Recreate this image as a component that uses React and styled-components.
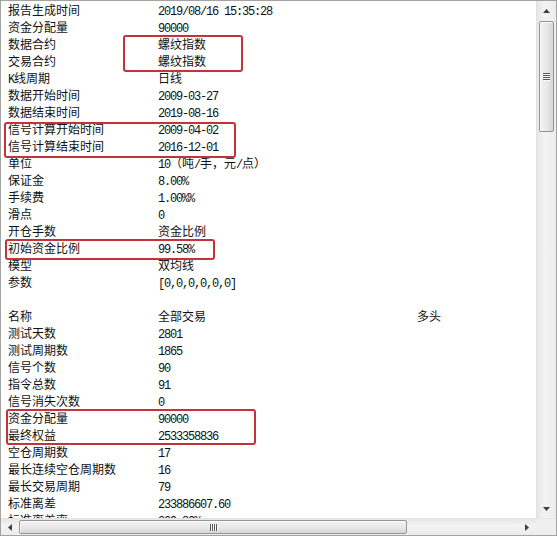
import React from "react";
import styled, { createGlobalStyle } from "styled-components";

const Global = createGlobalStyle`
  html, body { margin: 0; padding: 0; background: #ffffff; }
  #root { width: 557px; height: 536px; }
`;

const Frame = styled.div`
  position: relative;
  box-sizing: border-box;
  width: 557px;
  height: 536px;
  border: 1px solid #a3a3a3;
  background: #fff;
  display: flex;
  flex-direction: column;
  overflow: hidden;
`;

const Top = styled.div`
  flex: 1;
  display: flex;
  min-height: 0;
`;

const Content = styled.div`
  flex: 1;
  overflow: hidden;
  padding: 0 0 0 7px;
  font-family: "Noto Sans CJK SC", "Noto Sans", sans-serif;
  font-size: 12px;
  color: #111;
`;

const Row = styled.div`
  display: grid;
  grid-template-columns: 150px 259px 1fr;
  height: 17px;
  line-height: 17px;
  white-space: nowrap;
`;

const Cell = styled.span`
  overflow: visible;
`;

const Half = styled.span`
  font-family: "Liberation Mono", "DejaVu Sans Mono", monospace;
  font-size: 12px;
  letter-spacing: -1.2px;
`;

const VScroll = styled.div`
  width: 19px;
  background: linear-gradient(to right, #e6e6e6, #f3f3f3 40%, #ececec);
  border-left: 1px solid #e2e2e2;
  display: flex;
  flex-direction: column;
  align-items: center;
`;

const ArrowBox = styled.div`
  width: 17px;
  height: ${(p) => p.$h || 18}px;
  display: flex;
  align-items: center;
  justify-content: center;
  flex-shrink: 0;
`;

const VTrack = styled.div`
  flex: 1;
  width: 100%;
  display: flex;
  flex-direction: column;
  align-items: center;
`;

const VThumb = styled.div`
  box-sizing: border-box;
  width: 15px;
  height: 111px;
  margin-top: 1px;
  border: 1px solid #959595;
  border-radius: 2px;
  background: linear-gradient(to right, #f2f2f2, #e9e9e9 50%, #d6d6d6);
  box-shadow: inset 1px 1px 0 #fbfbfb;
  display: flex;
  flex-direction: column;
  align-items: center;
  justify-content: center;
  gap: 1px;
`;

const GripLineH = styled.div`
  width: 7px;
  height: 1px;
  background: #555;
  box-shadow: 0 1px 0 #fafafa;
`;

const Bottom = styled.div`
  height: 17px;
  display: flex;
  flex-shrink: 0;
`;

const HScroll = styled.div`
  flex: 1;
  display: flex;
  align-items: center;
  background: linear-gradient(to bottom, #e6e6e6, #f3f3f3 40%, #ececec);
  border-top: 1px solid #e2e2e2;
`;

const HArrow = styled.div`
  width: ${(p) => p.$w}px;
  height: 100%;
  display: flex;
  align-items: center;
  justify-content: center;
  flex-shrink: 0;
`;

const HTrack = styled.div`
  flex: 1;
  height: 100%;
  display: flex;
  align-items: center;
`;

const HThumb = styled.div`
  box-sizing: border-box;
  width: 388px;
  height: 14px;
  border: 1px solid #959595;
  border-radius: 2px;
  background: linear-gradient(to bottom, #f2f2f2, #e9e9e9 50%, #d6d6d6);
  box-shadow: inset 1px 1px 0 #fbfbfb;
  display: flex;
  align-items: center;
  justify-content: center;
  gap: 1px;
`;

const GripLineV = styled.div`
  width: 1px;
  height: 7px;
  background: #555;
  box-shadow: 1px 0 0 #fafafa;
`;

const Corner = styled.div`
  width: 20px;
  background: #efefef;
  border-top: 1px solid #e8e8e8;
`;

const Mark = styled.div`
  position: absolute;
  box-sizing: border-box;
  left: ${(p) => p.$x}px;
  top: ${(p) => p.$y}px;
  width: ${(p) => p.$w}px;
  height: ${(p) => p.$h}px;
  border: 2.5px solid #c4333a;
  border-radius: 3px;
  pointer-events: none;
`;

const Tri = ({ dir }) => {
  const pts = {
    up: "0,4 3.5,0 7,4",
    down: "0,0 3.5,4 7,0",
    left: "4,0 0,3.5 4,7",
    right: "0,0 4,3.5 0,7",
  }[dir];
  const vertical = dir === "up" || dir === "down";
  return (
    <svg width={vertical ? 7 : 4} height={vertical ? 4 : 7} viewBox={vertical ? "0 0 7 4" : "0 0 4 7"}>
      <polygon points={pts} fill="#404040" />
    </svg>
  );
};

const renderText = (text) =>
  text.split(/([\x20-\x7e]+)/).filter(Boolean).map((part, i) =>
    /^[\x20-\x7e]+$/.test(part) ? <Half key={i}>{part}</Half> : <React.Fragment key={i}>{part}</React.Fragment>
  );

const rows = [
  ["报告生成时间", "2019/08/16 15:35:28"],
  ["资金分配量", "90000"],
  ["数据合约", "螺纹指数"],
  ["交易合约", "螺纹指数"],
  ["K线周期", "日线"],
  ["数据开始时间", "2009-03-27"],
  ["数据结束时间", "2019-08-16"],
  ["信号计算开始时间", "2009-04-02"],
  ["信号计算结束时间", "2016-12-01"],
  ["单位", "10（吨/手，元/点）"],
  ["保证金", "8.00%"],
  ["手续费", "1.00%%"],
  ["滑点", "0"],
  ["开仓手数", "资金比例"],
  ["初始资金比例", "99.58%"],
  ["模型", "双均线"],
  ["参数", "[0,0,0,0,0,0]"],
  ["", ""],
  ["名称", "全部交易", "多头"],
  ["测试天数", "2801"],
  ["测试周期数", "1865"],
  ["信号个数", "90"],
  ["指令总数", "91"],
  ["信号消失次数", "0"],
  ["资金分配量", "90000"],
  ["最终权益", "2533358836"],
  ["空仓周期数", "17"],
  ["最长连续空仓周期数", "16"],
  ["最长交易周期", "79"],
  ["标准离差", "233886607.60"],
  ["标准离差率", "209.80%"],
];

const marks = [
  { x: 122, y: 34, w: 120, h: 37 },
  { x: 3, y: 121, w: 232, h: 36 },
  { x: 4, y: 238, w: 210, h: 21 },
  { x: 5, y: 408, w: 250, h: 36 },
];

export default function App() {
  return (
    <>
      <Global />
      <Frame>
        <Top>
          <Content>
            {rows.map((r, i) => (
              <Row key={i}>
                <Cell>{renderText(r[0])}</Cell>
                <Cell>{renderText(r[1])}</Cell>
                <Cell>{r[2] ? renderText(r[2]) : null}</Cell>
              </Row>
            ))}
          </Content>
          <VScroll>
            <ArrowBox $h={19}>
              <Tri dir="up" />
            </ArrowBox>
            <VTrack>
              <VThumb>
                <GripLineH />
                <GripLineH />
                <GripLineH />
                <GripLineH />
              </VThumb>
            </VTrack>
            <ArrowBox $h={18}>
              <Tri dir="down" />
            </ArrowBox>
          </VScroll>
        </Top>
        <Bottom>
          <HScroll>
            <HArrow $w={18}>
              <Tri dir="left" />
            </HArrow>
            <HTrack>
              <HThumb>
                <GripLineV />
                <GripLineV />
                <GripLineV />
                <GripLineV />
              </HThumb>
            </HTrack>
            <HArrow $w={18}>
              <Tri dir="right" />
            </HArrow>
          </HScroll>
          <Corner />
        </Bottom>
        {marks.map((m, i) => (
          <Mark key={i} $x={m.x} $y={m.y} $w={m.w} $h={m.h} />
        ))}
      </Frame>
    </>
  );
}
